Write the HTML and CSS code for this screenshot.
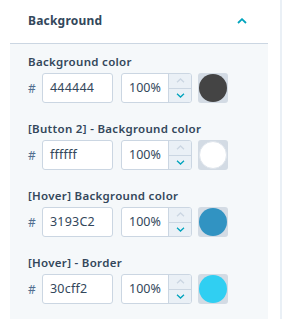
FILE: index.html
```html
<!DOCTYPE html>
<html lang="en">
<head>
    <meta charset="utf-8">
    <title>Background settings</title>
    <link rel="stylesheet" href="styles.css">
</head>
<body>
<div class="page">
    <div class="sidebar">
        <div class="section-head">
            <span class="section-title">Background</span>
            <svg class="chevron-up" width="10" height="6" viewBox="0 0 10 6">
                <path d="M1 5 L5 1.2 L9 5" fill="none" stroke="#00a4bd" stroke-width="1.8"/>
            </svg>
        </div>
        <div class="section-body">
            <div class="field">
                <div class="field_label">Background color</div>
                <div class="field_row">
                    <span class="hash">#</span>
                    <div class="hex-input">444444</div>
                    <div class="alpha">
                        <div class="alpha_value">100%</div>
                        <div class="stepper">
                            <span class="step step-up"><svg width="9" height="5" viewBox="0 0 9 5"><path d="M1 4.2 L4.5 1 L8 4.2" fill="none" stroke="#cbd6e2" stroke-width="1.3"/></svg></span>
                            <span class="step"><svg width="9" height="5" viewBox="0 0 9 5"><path d="M1 0.8 L4.5 4 L8 0.8" fill="none" stroke="#00a4bd" stroke-width="1.3"/></svg></span>
                        </div>
                    </div>
                    <div class="swatch"><span class="swatch_dot" style="background-color: #444444"></span></div>
                </div>
            </div>

            <div class="field">
                <div class="field_label">[Button 2] - Background color</div>
                <div class="field_row">
                    <span class="hash">#</span>
                    <div class="hex-input">ffffff</div>
                    <div class="alpha">
                        <div class="alpha_value">100%</div>
                        <div class="stepper">
                            <span class="step step-up"><svg width="9" height="5" viewBox="0 0 9 5"><path d="M1 4.2 L4.5 1 L8 4.2" fill="none" stroke="#cbd6e2" stroke-width="1.3"/></svg></span>
                            <span class="step"><svg width="9" height="5" viewBox="0 0 9 5"><path d="M1 0.8 L4.5 4 L8 0.8" fill="none" stroke="#00a4bd" stroke-width="1.3"/></svg></span>
                        </div>
                    </div>
                    <div class="swatch"><span class="swatch_dot swatch_dot-light" style="background-color: #ffffff"></span></div>
                </div>
            </div>

            <div class="field">
                <div class="field_label">[Hover] Background color</div>
                <div class="field_row">
                    <span class="hash">#</span>
                    <div class="hex-input">3193C2</div>
                    <div class="alpha">
                        <div class="alpha_value">100%</div>
                        <div class="stepper">
                            <span class="step step-up"><svg width="9" height="5" viewBox="0 0 9 5"><path d="M1 4.2 L4.5 1 L8 4.2" fill="none" stroke="#cbd6e2" stroke-width="1.3"/></svg></span>
                            <span class="step"><svg width="9" height="5" viewBox="0 0 9 5"><path d="M1 0.8 L4.5 4 L8 0.8" fill="none" stroke="#00a4bd" stroke-width="1.3"/></svg></span>
                        </div>
                    </div>
                    <div class="swatch"><span class="swatch_dot" style="background-color: #3193C2"></span></div>
                </div>
            </div>

            <div class="field">
                <div class="field_label">[Hover] - Border</div>
                <div class="field_row">
                    <span class="hash">#</span>
                    <div class="hex-input">30cff2</div>
                    <div class="alpha">
                        <div class="alpha_value">100%</div>
                        <div class="stepper">
                            <span class="step step-up"><svg width="9" height="5" viewBox="0 0 9 5"><path d="M1 4.2 L4.5 1 L8 4.2" fill="none" stroke="#cbd6e2" stroke-width="1.3"/></svg></span>
                            <span class="step"><svg width="9" height="5" viewBox="0 0 9 5"><path d="M1 0.8 L4.5 4 L8 0.8" fill="none" stroke="#00a4bd" stroke-width="1.3"/></svg></span>
                        </div>
                    </div>
                    <div class="swatch"><span class="swatch_dot" style="background-color: #30cff2"></span></div>
                </div>
            </div>
        </div>
    </div>
    <div class="edge"></div>
</div>
</body>
</html>
```

FILE: styles.css
```css
html, body {
    margin: 0;
    background-color: #fff;
    color: #33475b;
    font-family: 'Noto Sans', sans-serif;
}

.page {
    display: flex;
    width: 282px;
    height: 319px;
    overflow: hidden;
}

.sidebar {
    width: 258px;
    margin-left: 10px;
    margin-right: 12px;
}

.edge {
    width: 2px;
    background-color: #eaf0f6;
}

.section-head {
    display: flex;
    align-items: center;
    justify-content: space-between;
    height: 43px;
    padding: 0 21px 0 18px;
    border-bottom: 1px solid #cbd6e2;
}

.section-title {
    font-size: 12px;
    font-weight: 700;
    letter-spacing: 0.2px;
    margin-top: -2px;
}

.chevron-up {
    display: block;
    margin-top: -2px;
}

.section-body {
    background-color: #f5f8fa;
    padding: 10px 0 20px 18px;
    height: 300px;
}

.field {
    margin-bottom: 18px;
}

.field_label {
    font-size: 11.5px;
    font-weight: 600;
    line-height: 16px;
    letter-spacing: 0.3px;
    margin-bottom: 3px;
}

.field_row {
    display: flex;
    align-items: center;
}

.hash {
    width: 14px;
    font-size: 12px;
    color: #516f90;
}

.hex-input {
    box-sizing: border-box;
    width: 71px;
    height: 30px;
    padding: 0 7px;
    border: 1px solid #cbd6e2;
    border-radius: 3px;
    background-color: #fff;
    font-size: 12.5px;
    line-height: 28px;
    letter-spacing: 0.2px;
}

.alpha {
    display: flex;
    box-sizing: border-box;
    width: 71px;
    height: 30px;
    margin-left: 8px;
    border: 1px solid #cbd6e2;
    border-radius: 3px;
    background-color: #fff;
    overflow: hidden;
}

.alpha_value {
    flex: 1;
    padding-left: 7px;
    font-size: 12.5px;
    line-height: 28px;
}

.stepper {
    display: flex;
    flex-direction: column;
    width: 22px;
    border-left: 1px solid #cbd6e2;
    background-color: #eaf0f6;
}

.step {
    flex: 1;
    display: flex;
    align-items: center;
    justify-content: center;
}

.step svg {
    display: block;
}

.step-up {
    border-bottom: 1px solid #cbd6e2;
}

.swatch {
    display: flex;
    align-items: center;
    justify-content: center;
    width: 30px;
    height: 30px;
    margin-left: 6px;
    border-radius: 3px;
    background-color: #d3dbe4;
}

.swatch_dot {
    box-sizing: border-box;
    width: 28px;
    height: 28px;
    border-radius: 50%;
}

.swatch_dot-light {
    border: 1px solid #dfe5ec;
}
```
